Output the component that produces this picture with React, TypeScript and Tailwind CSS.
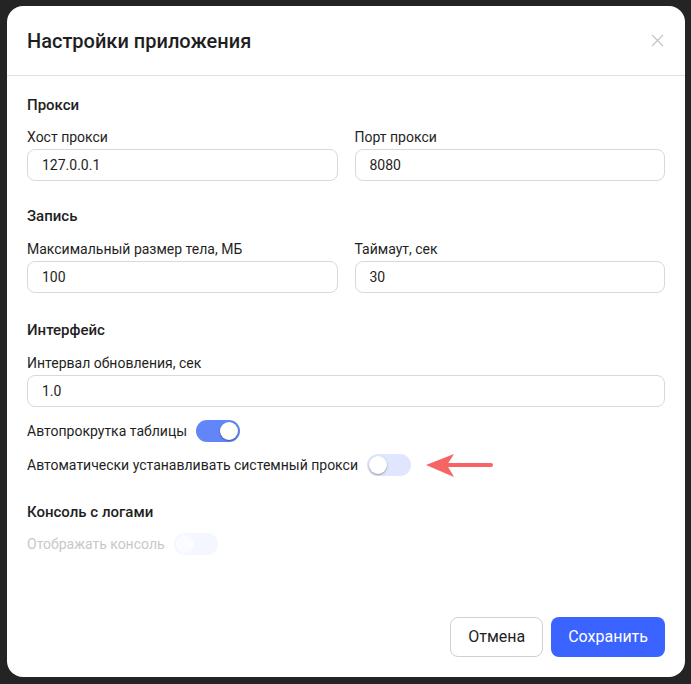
import React, { useState } from "react";

function Toggle({
  on,
  disabled,
  onChange,
}: {
  on: boolean;
  disabled?: boolean;
  onChange?: () => void;
}) {
  const track = disabled
    ? "bg-[#f4f7ff]"
    : on
      ? "bg-[#6286f7]"
      : "bg-[#dfe6fd]";
  return (
    <button
      type="button"
      onClick={disabled ? undefined : onChange}
      className={`relative h-[22px] w-[44px] shrink-0 rounded-full ${track}`}
    >
      <span
        className={`absolute top-[2px] h-[18px] w-[18px] rounded-full ${
          disabled ? "bg-[#fbfcff]" : "bg-white shadow-[0_1px_2px_rgba(0,0,0,0.35)]"
        } ${on ? "left-[24px]" : "left-[2px]"}`}
      />
    </button>
  );
}

function Field({ label, value }: { label: string; value: string }) {
  return (
    <div className="flex flex-col">
      <label className="mb-[2px] text-[14px] leading-5 text-[#1f1f1f]">
        {label}
      </label>
      <input
        defaultValue={value}
        className="h-[32px] rounded-lg border border-[#d9d9d9] px-[14px] text-[14px] text-[#1f1f1f] outline-none"
      />
    </div>
  );
}

function Heading({ children }: { children: React.ReactNode }) {
  return (
    <h2 className="text-[15px] font-medium leading-[22px] text-[#1f1f1f]">
      {children}
    </h2>
  );
}

export default function App() {
  const [autoScroll, setAutoScroll] = useState(true);
  const [sysProxy, setSysProxy] = useState(false);

  return (
    <div
      className="flex h-[684px] w-[691px] items-start bg-[#242424] pl-[7px] pt-[6px]"
      style={{ fontFamily: "Roboto, 'Noto Sans', sans-serif" }}
    >
      <div className="flex h-[671px] w-[678px] flex-col rounded-2xl bg-white">
        <div className="flex h-[70px] shrink-0 items-center justify-between border-b border-[#e0e0e0] pl-5 pr-[21px]">
          <h1 className="text-[20px] font-medium text-[#1f1f1f]">
            Настройки приложения
          </h1>
          <svg width="13" height="13" viewBox="0 0 13 13" className="text-[#c4c4c4]">
            <path d="M1 1L12 12M12 1L1 12" stroke="currentColor" strokeWidth="1.2" />
          </svg>
        </div>

        <div className="flex flex-1 flex-col px-5 pt-[18px]">
          <Heading>Прокси</Heading>
          <div className="mt-[11px] grid grid-cols-2 gap-x-[17px]">
            <Field label="Хост прокси" value="127.0.0.1" />
            <Field label="Порт прокси" value="8080" />
          </div>

          <div className="mt-[24px]">
            <Heading>Запись</Heading>
          </div>
          <div className="mt-[12px] grid grid-cols-2 gap-x-[17px]">
            <Field label="Максимальный размер тела, МБ" value="100" />
            <Field label="Таймаут, сек" value="30" />
          </div>

          <div className="mt-[26px]">
            <Heading>Интерфейс</Heading>
          </div>
          <div className="mt-[12px]">
            <Field label="Интервал обновления, сек" value="1.0" />
          </div>

          <div className="mt-[13px] flex items-center gap-[9px] text-[14px] text-[#1f1f1f]">
            <span>Автопрокрутка таблицы</span>
            <Toggle on={autoScroll} onChange={() => setAutoScroll(!autoScroll)} />
          </div>
          <div className="mt-[10px] flex items-center gap-[9px] text-[14px] text-[#1f1f1f]">
            <span>Автоматически устанавливать системный прокси</span>
            <Toggle on={sysProxy} onChange={() => setSysProxy(!sysProxy)} />
            <svg width="70" height="26" viewBox="0 0 70 26" className="ml-[4px]">
              <path d="M20 13H67" stroke="#f76464" strokeWidth="4" strokeLinecap="round" />
              <path d="M2 13L30 2L23 13L30 25Z" fill="#f76464" />
            </svg>
          </div>

          <div className="mt-[23px]">
            <Heading>Консоль с логами</Heading>
          </div>
          <div className="mt-[10px] flex items-center gap-[9px] text-[14px] text-[#c8c8c8]">
            <span>Отображать консоль</span>
            <Toggle on={false} disabled />
          </div>

          <div className="mt-auto mb-5 flex justify-end gap-2">
            <button className="h-[40px] rounded-lg border border-[#d0d0d0] bg-white px-[17px] text-[16px] text-[#1f1f1f]">
              Отмена
            </button>
            <button className="h-[40px] rounded-lg bg-[#3b63ff] px-[17px] text-[16px] text-white">
              Сохранить
            </button>
          </div>
        </div>
      </div>
    </div>
  );
}
